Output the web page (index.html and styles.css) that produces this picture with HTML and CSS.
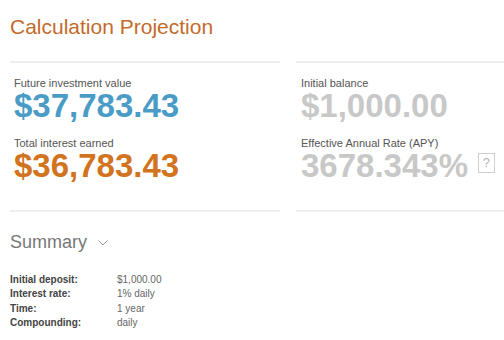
FILE: index.html
```html
<!DOCTYPE html>
<html lang="en">
<head>
    <meta charset="UTF-8">
    <meta name="viewport" content="width=device-width, initial-scale=1.0">
    <title>Calculation Projection</title>
    <link rel="stylesheet" href="styles.css">
</head>
<body>

    <h1>Calculation Projection</h1>

    <div class="results">
        <div class="col">
            <div class="stat">
                <p class="label">Future investment value</p>
                <p class="value blue">$37,783.43</p>
            </div>
            <div class="stat">
                <p class="label">Total interest earned</p>
                <p class="value orange">$36,783.43</p>
            </div>
        </div>

        <div class="col col-right">
            <div class="stat">
                <p class="label">Initial balance</p>
                <p class="value grey">$1,000.00</p>
            </div>
            <div class="stat">
                <p class="label">Effective Annual Rate (APY)</p>
                <p class="value grey">3678.343%<span class="help">?</span></p>
            </div>
        </div>
    </div>

    <!-- Summary -->
    <h2 class="summary-title">Summary
        <svg class="chevron" width="10" height="6" viewBox="0 0 10 6">
            <path d="M0.5 0.5 L5 5 L9.5 0.5" fill="none" stroke="#999" stroke-width="1"/>
        </svg>
    </h2>

    <div class="summary">
        <span class="key">Initial deposit:</span><span class="val">$1,000.00</span>
        <span class="key">Interest rate:</span><span class="val">1% daily</span>
        <span class="key">Time:</span><span class="val">1 year</span>
        <span class="key">Compounding:</span><span class="val">daily</span>
    </div>

</body>
</html>
```

FILE: styles.css
```css
* {
    margin: 0;
    padding: 0;
    box-sizing: border-box;
}

body {
    font-family: "Liberation Sans", Arial, sans-serif;
    background: #fff;
    padding: 14px 0 0 10px;
    overflow: hidden;
}

h1 {
    font-size: 21px;
    font-weight: normal;
    line-height: 25px;
    color: #c36b2b;
    margin-bottom: 22px;
}

.results {
    display: grid;
    grid-template-columns: 270px 208px;
    gap: 16px;
}

.col {
    border-top: 2px solid #eeeeee;
    border-bottom: 2px solid #eeeeee;
    padding: 14.5px 4px 27.5px;
}

.col-right {
    padding-left: 5px;
}

.stat + .stat {
    margin-top: 15.5px;
}

.label {
    font-size: 11px;
    line-height: 11px;
    color: #555;
}

.value {
    margin-top: 0.5px;
    font-size: 33px;
    font-weight: bold;
    line-height: 33px;
    white-space: nowrap;
    display: flex;
    align-items: center;
}

.blue {
    color: #4a9cc6;
}

.orange {
    color: #d2731e;
}

.grey {
    color: #c8c8c8;
}

/* little help box next to APY */
.help {
    align-self: flex-start;
    flex-shrink: 0;
    width: 17px;
    height: 20px;
    margin-left: 10px;
    margin-top: 4px;
    border: 1px solid #cfcfcf;
    font-size: 13px;
    font-weight: normal;
    line-height: 18px;
    text-align: center;
    color: #b5b5b5;
}

.summary-title {
    margin-top: 19px;
    font-size: 18px;
    font-weight: normal;
    line-height: 22px;
    color: #777;
    display: flex;
    align-items: center;
}

.chevron {
    margin-left: 11px;
    margin-top: 2px;
}

.summary {
    display: grid;
    grid-template-columns: 107px auto;
    margin-top: 20px;
    font-size: 10px;
    line-height: 14.5px;
}

.key {
    font-weight: bold;
    color: #444;
}

.val {
    color: #666;
}
```
